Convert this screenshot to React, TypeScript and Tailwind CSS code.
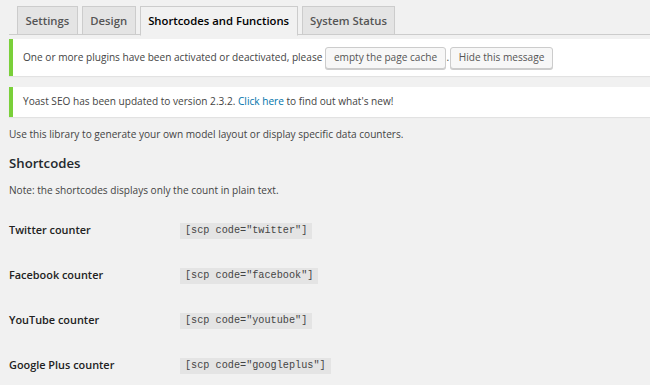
import React from 'react';

const tabs = ['Settings', 'Design', 'Shortcodes and Functions', 'System Status'];

const counters = [
  { label: 'Twitter counter', code: '[scp code="twitter"]' },
  { label: 'Facebook counter', code: '[scp code="facebook"]' },
  { label: 'YouTube counter', code: '[scp code="youtube"]' },
  { label: 'Google Plus counter', code: '[scp code="googleplus"]' },
];

const Notice: React.FC<{ children: React.ReactNode; className?: string }> = ({ children, className }) => (
  <div className={`ml-[9px] bg-white border-l-4 border-[#7ad03a] shadow-[0_1px_1px_rgba(0,0,0,0.06)] pl-[10px] flex items-center whitespace-nowrap ${className ?? ''}`}>
    {children}
  </div>
);

export default function App() {
  return (
    <div className="min-h-[385px] w-[650px] overflow-hidden bg-[#f1f1f1] text-[10.1px] text-[#444] font-['Open_Sans',sans-serif]">
      {/* tabs */}
      <div className="ml-[9px] pt-[6px] pl-[8px] flex gap-[4px] border-b border-[#ccc] h-[35px]">
        {tabs.map((t, i) => {
          const active = i === 2;
          return (
            <div
              key={t}
              className={`h-[29px] px-[7.5px] border border-[#ccc] flex items-center text-[11.3px] font-semibold leading-none ${
                active ? 'bg-[#f1f1f1] text-black border-b-[#f1f1f1] h-[30px]' : 'bg-[#e4e4e4] text-[#555]'
              }`}
            >
              {t}
            </div>
          );
        })}
      </div>

      <Notice className="mt-[4px] h-[37px]">
        <span>One or more plugins have been activated or deactivated, please</span>
        <button className="ml-[3px] h-[22px] px-[7.5px] bg-[#f7f7f7] border border-[#ccc] rounded-[3px] shadow-[0_1px_0_#ccc] text-[#555] leading-none">
          empty the page cache
        </button>
        <span className="ml-[1px]">.</span>
        <button className="ml-[1px] h-[22px] px-[7.5px] bg-[#f7f7f7] border border-[#ccc] rounded-[3px] shadow-[0_1px_0_#ccc] text-[#555] leading-none">
          Hide this message
        </button>
      </Notice>

      <Notice className="mt-[11px] h-[30px]">
        <span>
          Yoast SEO has been updated to version 2.3.2. <span className="text-[#0073aa]">Click here</span> to find out what's new!
        </span>
      </Notice>

      <div className="pl-[9px]">
        <p className="mt-[9px] leading-[17px]">Use this library to generate your own model layout or display specific data counters.</p>
        <h3 className="mt-[10px] text-[13.2px] font-semibold text-[#23282d] leading-[20px]">Shortcodes</h3>
        <p className="mt-[9px] leading-[17px]">Note: the shortcodes displays only the count in plain text.</p>

        <div className="mt-[22px] flex flex-col gap-[28px]">
          {counters.map((c) => (
            <div key={c.label} className="flex items-start h-[17px]">
              <div className="w-[171px] text-[10.9px] font-semibold text-[#222] leading-[17px]">{c.label}</div>
              <code className="mt-[2px] bg-[#e4e4e4] px-[5px] h-[16px] flex items-center text-[10.2px] text-[#444] font-['Liberation_Mono',monospace]">
                {c.code}
              </code>
            </div>
          ))}
        </div>
      </div>
    </div>
  );
}
